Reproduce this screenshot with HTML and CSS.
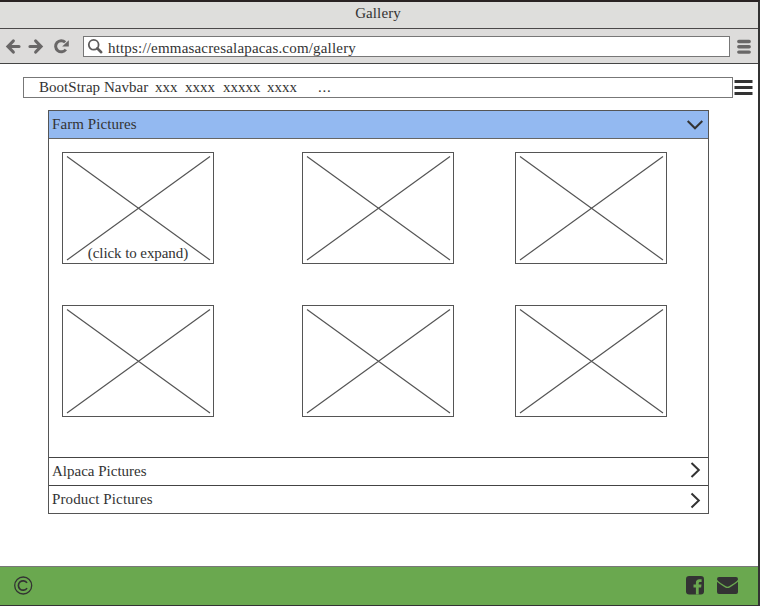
FILE: index.html
```html
<!DOCTYPE html>
<html lang="en">
<head>
<meta charset="utf-8">
<title>Gallery</title>
<link rel="stylesheet" href="styles.css">
</head>
<body>
<div class="window">
  <header class="titlebar"><span class="title">Gallery</span></header>
  <div class="toolbar">
    <svg class="nav-icons" width="83" height="34" viewBox="0 0 83 34" fill="none" stroke="#696767" stroke-width="3.2" stroke-linecap="round">
      <path d="M19 17.500H9M13.300 12L8 17.500L13.300 23"/>
      <path d="M30 17.500H40.500M35.700 12L41 17.500L35.700 23"/>
      <path d="M65.800 20.500A5.600 5.600 0 1 1 65.200 13.300" stroke-width="3" stroke-linecap="butt"/>
      <path d="M68.800 11.300V17.600H62.200Z" fill="#696767" stroke="none"/>
    </svg>
    <div class="address">
      <svg width="20" height="19" viewBox="0 0 20 19" fill="none" stroke="#5d5b5b"><circle cx="9.700" cy="7.800" r="4.900" stroke-width="1.800"/><path d="M13.200 11.300L17.200 15.200" stroke-width="2.600" stroke-linecap="round"/></svg>
      <span class="url">https://emmasacresalapacas.com/gallery</span>
    </div>
    <svg class="browser-menu" width="14" height="16" viewBox="0 0 14 16" stroke="#696767" stroke-width="3.400" stroke-linecap="round"><path d="M1.800 2.500H12.200M1.800 7.800H12.200M1.800 13.100H12.200"/></svg>
  </div>
  <main>
    <div class="nav-row">
      <nav class="navbar"><span class="brand">BootStrap Navbar</span><span class="n1">xxx</span><span class="n2">xxxx</span><span class="n3">xxxxx</span><span class="n4">xxxx</span><span class="n5">...</span></nav>
      <svg class="menu" width="20" height="17" viewBox="0 0 20 17" stroke="#333" stroke-width="3"><path d="M1.500 2.500H19.500M1.500 8.500H19.500M1.500 14.500H19.500"/></svg>
    </div>
    <section class="accordion">
      <div class="panel-head open"><span class="farm">Farm Pictures</span><svg width="18" height="12" viewBox="0 0 18 12" fill="none" stroke="#333" stroke-width="2"><path d="M1.700 2L9 9.300L16.300 2"/></svg></div>
      <div class="gallery">
        <div class="picture"><svg viewBox="0 0 150 110"><path d="M4 3.500L147 107M147 3.500L4 107"/></svg><span class="caption">(click to expand)</span></div>
        <div class="picture"><svg viewBox="0 0 150 110"><path d="M4 3.500L147 107M147 3.500L4 107"/></svg></div>
        <div class="picture"><svg viewBox="0 0 150 110"><path d="M4 3.500L147 107M147 3.500L4 107"/></svg></div>
        <div class="picture"><svg viewBox="0 0 150 110"><path d="M4 3.500L147 107M147 3.500L4 107"/></svg></div>
        <div class="picture"><svg viewBox="0 0 150 110"><path d="M4 3.500L147 107M147 3.500L4 107"/></svg></div>
        <div class="picture"><svg viewBox="0 0 150 110"><path d="M4 3.500L147 107M147 3.500L4 107"/></svg></div>
      </div>
      <div class="panel-head"><span class="alpaca">Alpaca Pictures</span><svg class="right up" width="12" height="18" viewBox="0 0 12 18" fill="none" stroke="#333" stroke-width="2"><path d="M1.500 2L8.800 9L1.500 16"/></svg></div>
      <div class="panel-head"><span class="product">Product Pictures</span><svg class="right" width="12" height="18" viewBox="0 0 12 18" fill="none" stroke="#333" stroke-width="2"><path d="M1.500 2.500L8.800 9.500L1.500 16.500"/></svg></div>
    </section>
  </main>
  <footer>
    <svg width="19" height="19" viewBox="0 0 19 19" fill="none" stroke="#333"><circle cx="9.200" cy="9.500" r="8.500" stroke-width="1.300"/><path d="M13 6.900A4.700 4.700 0 1 0 13 12.100" stroke-width="1.700"/></svg>
    <svg class="facebook" width="18" height="19" viewBox="0 0 18 19"><rect width="18" height="18.500" rx="3.200" fill="#333"/><path d="M9.900 18.500V11.400H7.500V8.600H9.900V6.700Q9.900 3.200 13.500 3.200H15.600V6H14Q12.700 6 12.700 7.200V8.600H15.500L15.100 11.400H12.700V18.500Z" fill="#6aa84f"/></svg>
    <svg class="mail" width="21" height="17" viewBox="0 0 21 17" fill="#333"><path d="M2 0H19Q21 0 21 2.200C20.500 4 17 6.200 12.500 9Q10.500 10.300 8.500 9C4 6.200 0.500 4 0 2.200Q0 0 2 0Z"/><path d="M0 4.700Q2 6.500 7.800 10.200Q10.500 12 13.200 10.200Q19 6.500 21 4.700V15Q21 17 19 17H2Q0 17 0 15Z"/></svg>
  </footer>
</div>
</body>
</html>
```
FILE: styles.css
```css
* { box-sizing: border-box; }
body { margin: 0; background: #fff; color: #333; font: 15px/18px "Liberation Serif", serif; }
svg { display: block; flex: none; }
span { white-space: pre; }
.window { width: 760px; height: 606px; border-top: 2px solid #292323; border-right: 2px solid #333; border-bottom: 1px solid #333; display: flex; flex-direction: column; }
.titlebar { height: 27px; background: #dededc; border-bottom: 1px solid #4b4949; text-align: center; padding-top: 2px; }
.title { letter-spacing: .1px; margin-right: 2px; }
.toolbar { height: 35px; background: #dddcdb; border-bottom: 1px solid #444; display: flex; align-items: flex-start; }
.address { width: 647px; height: 21px; margin-top: 7px; border: 1px solid #777; background: #fff; display: flex; }
.url { margin: 2px 0 0 4px; letter-spacing: .18px; }
.browser-menu { margin: 10px 0 0 7px; }
main { flex: 1; }
.nav-row { display: flex; margin: 13px 0 0 23px; }
.navbar { width: 710px; height: 21px; border: 1px solid #777; display: flex; padding-left: 15px; }
.brand { width: 116px; letter-spacing: .03px; }
.n1 { width: 30px; }
.n2 { width: 38px; }
.n3 { width: 44px; }
.n4 { width: 51px; }
.n5 { letter-spacing: .8px; }
.menu { margin: 2px 0 0; }
.accordion { width: 661px; margin: 12px 0 0 48px; border: 1px solid #555; }
.panel-head { height: 28px; display: flex; justify-content: space-between; align-items: center; padding: 0 4px 2px 3px; border-top: 1px solid #444; }
.panel-head.open { background: #93b9f1; border-top: 0; border-bottom: 1px solid #666; }
.panel-head.open svg { margin-top: 2px; }
.farm { letter-spacing: .08px; }
.product { letter-spacing: .12px; padding-top: 1px; }
.right { margin: 3px 2px 0 0; }
.up { margin-top: -1px; }
.gallery { height: 318px; padding: 13px 0 0 13px; display: grid; grid-template-columns: 240px 213px 152px; grid-template-rows: 112px 112px; row-gap: 41px; }
.picture { position: relative; width: 152px; height: 112px; border: 1px solid #555; }
.picture svg { width: 150px; height: 110px; stroke: #555; stroke-width: 1.2; fill: none; }
.caption { position: absolute; left: 0; right: 0; bottom: 1px; text-align: center; letter-spacing: -.08px; }
footer { height: 39px; background: #6aa84f; border-top: 1px solid #777; display: flex; align-items: center; padding: 0 0 2px 14px; }
.facebook { margin-left: auto; }
.mail { margin: 0 20px 0 13px; }
```
